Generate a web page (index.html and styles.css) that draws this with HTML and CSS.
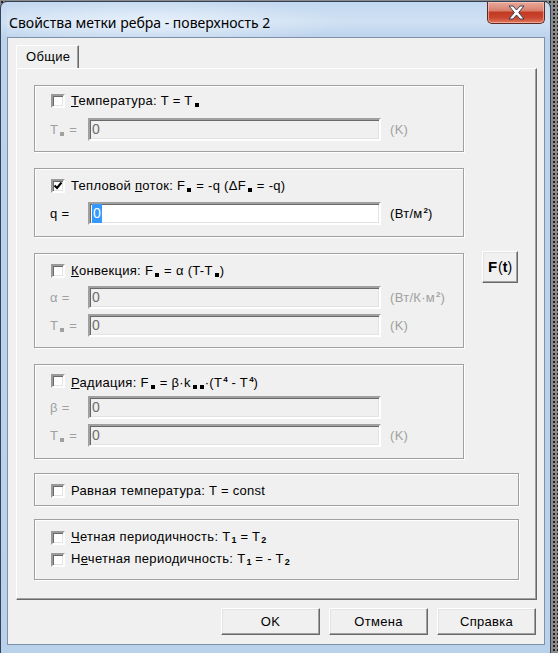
FILE: index.html
```html
<!DOCTYPE html>
<html lang="ru">
<head>
<meta charset="utf-8">
<title>Свойства метки ребра</title>
<link rel="stylesheet" href="styles.css">
</head>
<body>
<div class="screen">
  <div class="window">
    <div class="titlebar">
      <div class="title">Свойства метки ребра - поверхность 2</div>
      <div class="close">
        <svg width="17" height="15" viewBox="0 0 17 15">
          <polygon points="1,1 5,1 8.5,5 12,1 16,1 10.7,7.5 16,14 12,14 8.5,10 5,14 1,14 6.3,7.5" fill="#fff" stroke="#3a3f55" stroke-width="1" stroke-linejoin="round"/>
        </svg>
      </div>
    </div>
    <div class="client">
      <div class="tabstrip"><div class="tab">Общие</div></div>
      <div class="panel">
        <div class="upper">
          <div class="group g1">
            <div class="cbrow"><span class="cb"></span><span class="lbl"><u>Т</u>емпература: T = T<i class="sq"></i></span></div>
            <div class="inrow dis"><span class="ilbl">T<i class="sq"></i> =</span><span class="inp">0</span><span class="unit">(K)</span></div>
          </div>
          <div class="group g2">
            <div class="cbrow"><span class="cb checked"><svg width="10" height="10" viewBox="0 0 10 10"><polyline points="1.5,4.5 4,7 8.5,1.5" fill="none" stroke="#000" stroke-width="2"/></svg></span><span class="lbl">Тепловой <u>п</u>оток: F<i class="sq"></i> = -q (ΔF<i class="sq"></i> = -q)</span></div>
            <div class="inrow"><span class="ilbl">q =</span><span class="inp on"><span class="sel">0</span></span><span class="unit">(Вт/м<b class="sup">2</b>)</span></div>
          </div>
          <div class="group g3">
            <div class="cbrow"><span class="cb"></span><span class="lbl"><u>К</u>онвекция: F<i class="sq"></i> = α (T-T<i class="sq"></i>)</span></div>
            <div class="inrow dis"><span class="ilbl">α =</span><span class="inp">0</span><span class="unit">(Вт/К·м<b class="sup">2</b>)</span></div>
            <div class="inrow dis"><span class="ilbl">T<i class="sq"></i> =</span><span class="inp">0</span><span class="unit">(K)</span></div>
          </div>
          <div class="ftwrap"><div class="btn ft"><b class="bigf">F</b>(<b>t</b>)</div></div>
          <div class="group g4">
            <div class="cbrow"><span class="cb"></span><span class="lbl"><u>Р</u>адиация: F<i class="sq"></i> = β·k<i class="sq"></i><i class="sq"></i>·(T<b class="sup">4</b> - T<b class="sup">4</b>)</span></div>
            <div class="inrow dis"><span class="ilbl">β =</span><span class="inp">0</span></div>
            <div class="inrow dis"><span class="ilbl">T<i class="sq"></i> =</span><span class="inp">0</span><span class="unit">(K)</span></div>
          </div>
        </div>
        <div class="group g5">
          <div class="cbrow"><span class="cb"></span><span class="lbl">Равная температура: T = const</span></div>
        </div>
        <div class="group g6">
          <div class="cbrow"><span class="cb"></span><span class="lbl"><u>Ч</u>етная периодичность: T<b class="sub">1</b> = T<b class="sub">2</b></span></div>
          <div class="cbrow"><span class="cb"></span><span class="lbl">Н<u>е</u>четная периодичность: T<b class="sub">1</b> = - T<b class="sub">2</b></span></div>
        </div>
      </div>
      <div class="btnrow">
        <div class="btn push">OK</div>
        <div class="btn push">Отмена</div>
        <div class="btn push">Справка</div>
      </div>
    </div>
  </div>
</div>
</body>
</html>
```

FILE: styles.css
```css
html, body {
  margin: 0;
  padding: 0;
}
body {
  width: 558px;
  height: 653px;
  overflow: hidden;
  font-family: "Liberation Sans", Arial, sans-serif;
  font-size: 13px;
  letter-spacing: 0.3px;
  color: #000;
  background-color: #8a8a8a;
  background-image: radial-gradient(circle, #222 0.8px, transparent 1.2px);
  background-size: 4px 4px;
}
.screen {
  padding-top: 1px;
}
.window {
  width: 538px;
  height: 649px;
  border: 1px solid #34435a;
  border-radius: 7px 7px 0 0;
  padding: 0 5px 6px 6px;
  display: flex;
  flex-direction: column;
  background: linear-gradient(180deg, #c3d8ef 0px, #cfe0f3 20px, #bcd3ec 36px, #b9d1ea 100%);
}
.titlebar {
  height: 35px;
  display: flex;
  align-items: flex-start;
  background: radial-gradient(ellipse 200px 22px at 140px 20px, rgba(235,243,252,0.85), rgba(235,243,252,0) 100%);
}
.title {
  font-family: "Noto Sans", "Open Sans", sans-serif;
  font-size: 14px;
  letter-spacing: 0;
  line-height: 20px;
  padding-top: 11px;
  padding-left: 2px;
  color: #000;
  white-space: nowrap;
}
.close {
  margin-left: auto;
  width: 56px;
  height: 21px;
  border: 1px solid #5b2a25;
  border-top: none;
  border-radius: 0 0 5px 5px;
  background: linear-gradient(180deg, #e9a99b 0%, #d9826f 40%, #c23a24 50%, #c9452f 75%, #e07a5c 100%);
  box-shadow: inset 0 0 0 1px rgba(255,210,200,0.55);
  display: flex;
  align-items: center;
  justify-content: center;
}
.client {
  width: 536px;
  height: 606px;
  border: 1px solid #7f91a8;
  background: #f0f0f0;
  display: flex;
  flex-direction: column;
}
.tabstrip {
  padding: 7px 0 0 8px;
  height: 23px;
  display: flex;
}
.tab {
  height: 22px;
  padding: 0 8px 0 9px;
  line-height: 21px;
  border: 1px solid #fff;
  border-bottom: none;
  border-right: 1px solid #696969;
  box-shadow: inset -1px 0 #a0a0a0;
  background: #f0f0f0;
  position: relative;
  z-index: 1;
  margin-bottom: -1px;
}
.panel {
  margin-left: 8px;
  width: 485px;
  height: 514px;
  padding: 16px 17px 0 17px;
  border: 1px solid;
  border-color: #fff #696969 #696969 #fff;
  box-shadow: inset -1px -1px #a0a0a0;
}
.upper {
  display: grid;
  grid-template-columns: 430px 36px;
  column-gap: 18px;
  row-gap: 16px;
}
.group {
  border: 1px solid #a0a0a0;
  box-shadow: inset 1px 1px #fff, 1px 1px #fff;
  padding-left: 15px;
  display: flex;
  flex-direction: column;
}
.upper .group { grid-column: 1; }
.g1 { padding-top: 7px; padding-bottom: 10px; }
.g2 { padding-top: 9px; padding-bottom: 11px; }
.g3 { padding-top: 9px; padding-bottom: 10px; }
.g4 { padding-top: 8px; padding-bottom: 11px; }
.g5 { padding-top: 9px; padding-bottom: 6px; margin-top: 14px; }
.g6 { padding-top: 10px; padding-bottom: 11px; margin-top: 13px; row-gap: 6px; }
.g1 .inrow, .g2 .inrow { margin-top: 9px; }
.g2 .inrow { margin-top: 8px; }
.g3 .inrow, .g4 .inrow { margin-top: 7px; }
.g3 .inrow + .inrow, .g4 .inrow + .inrow { margin-top: 5px; }
.cbrow {
  display: flex;
  align-items: center;
  height: 16px;
  padding-left: 1px;
}
.cb {
  width: 10px;
  height: 10px;
  background: #fff;
  border: 2px solid;
  border-color: #9a9a9a #fdfdfd #fdfdfd #9a9a9a;
  box-shadow: inset 1px 1px #6a6a6a, inset -1px -1px #e3e3e3;
  display: flex;
  align-items: center;
  justify-content: center;
  flex: none;
}
.lbl {
  margin-left: 6px;
  line-height: 16px;
  white-space: nowrap;
}
u { text-decoration: underline; text-underline-offset: 1px; }
.sq {
  display: inline-block;
  width: 4px;
  height: 4px;
  background: currentColor;
  vertical-align: -2px;
  margin: 0 1px 0 2px;
}
.sup {
  font-size: 8px;
  letter-spacing: 0;
  vertical-align: 5px;
  margin: 0 0 0 1px;
}
.sub {
  font-size: 9px;
  letter-spacing: 0;
  vertical-align: -2px;
  margin-left: 1px;
}
.inrow {
  display: flex;
  align-items: center;
  height: 23px;
}
.ilbl {
  width: 38px;
  flex: none;
  white-space: nowrap;
}
.dis { color: #a0a0a0; }
.inp {
  width: 285px;
  height: 19px;
  padding: 0 2px;
  border: 2px solid;
  border-color: #a0a0a0 #fff #fff #a0a0a0;
  box-shadow: inset 1px 1px #696969, inset -1px -1px #e3e3e3;
  background: #f0f0f0;
  color: #6d6d6d;
  line-height: 19px;
  font-size: 14px;
  display: flex;
  align-items: center;
}
.inp.on { background: #fff; }
.sel {
  background: #3399ff;
  color: #fff;
  padding: 0 1px;
  line-height: 19px;
  height: 19px;
}
.unit {
  margin-left: 9px;
  white-space: nowrap;
}
.ftwrap {
  grid-column: 2;
  grid-row: 3;
  margin-top: -2px;
}
.btn {
  box-sizing: border-box;
  border: 1px solid;
  border-color: #fff #696969 #696969 #fff;
  box-shadow: inset -1px -1px #a0a0a0, inset 1px 1px #e3e3e3;
  background: #f0f0f0;
  display: flex;
  align-items: center;
  justify-content: center;
}
.ft {
  width: 36px;
  height: 32px;
  font-size: 14px;
  letter-spacing: 0;
  padding-bottom: 1px;
}
.ft .bigf { font-size: 15px; margin-right: 1px; }
.btnrow {
  display: flex;
  justify-content: flex-end;
  gap: 9px;
  margin-top: 8px;
  margin-right: 8px;
}
.push {
  width: 99px;
  height: 27px;
}
```
